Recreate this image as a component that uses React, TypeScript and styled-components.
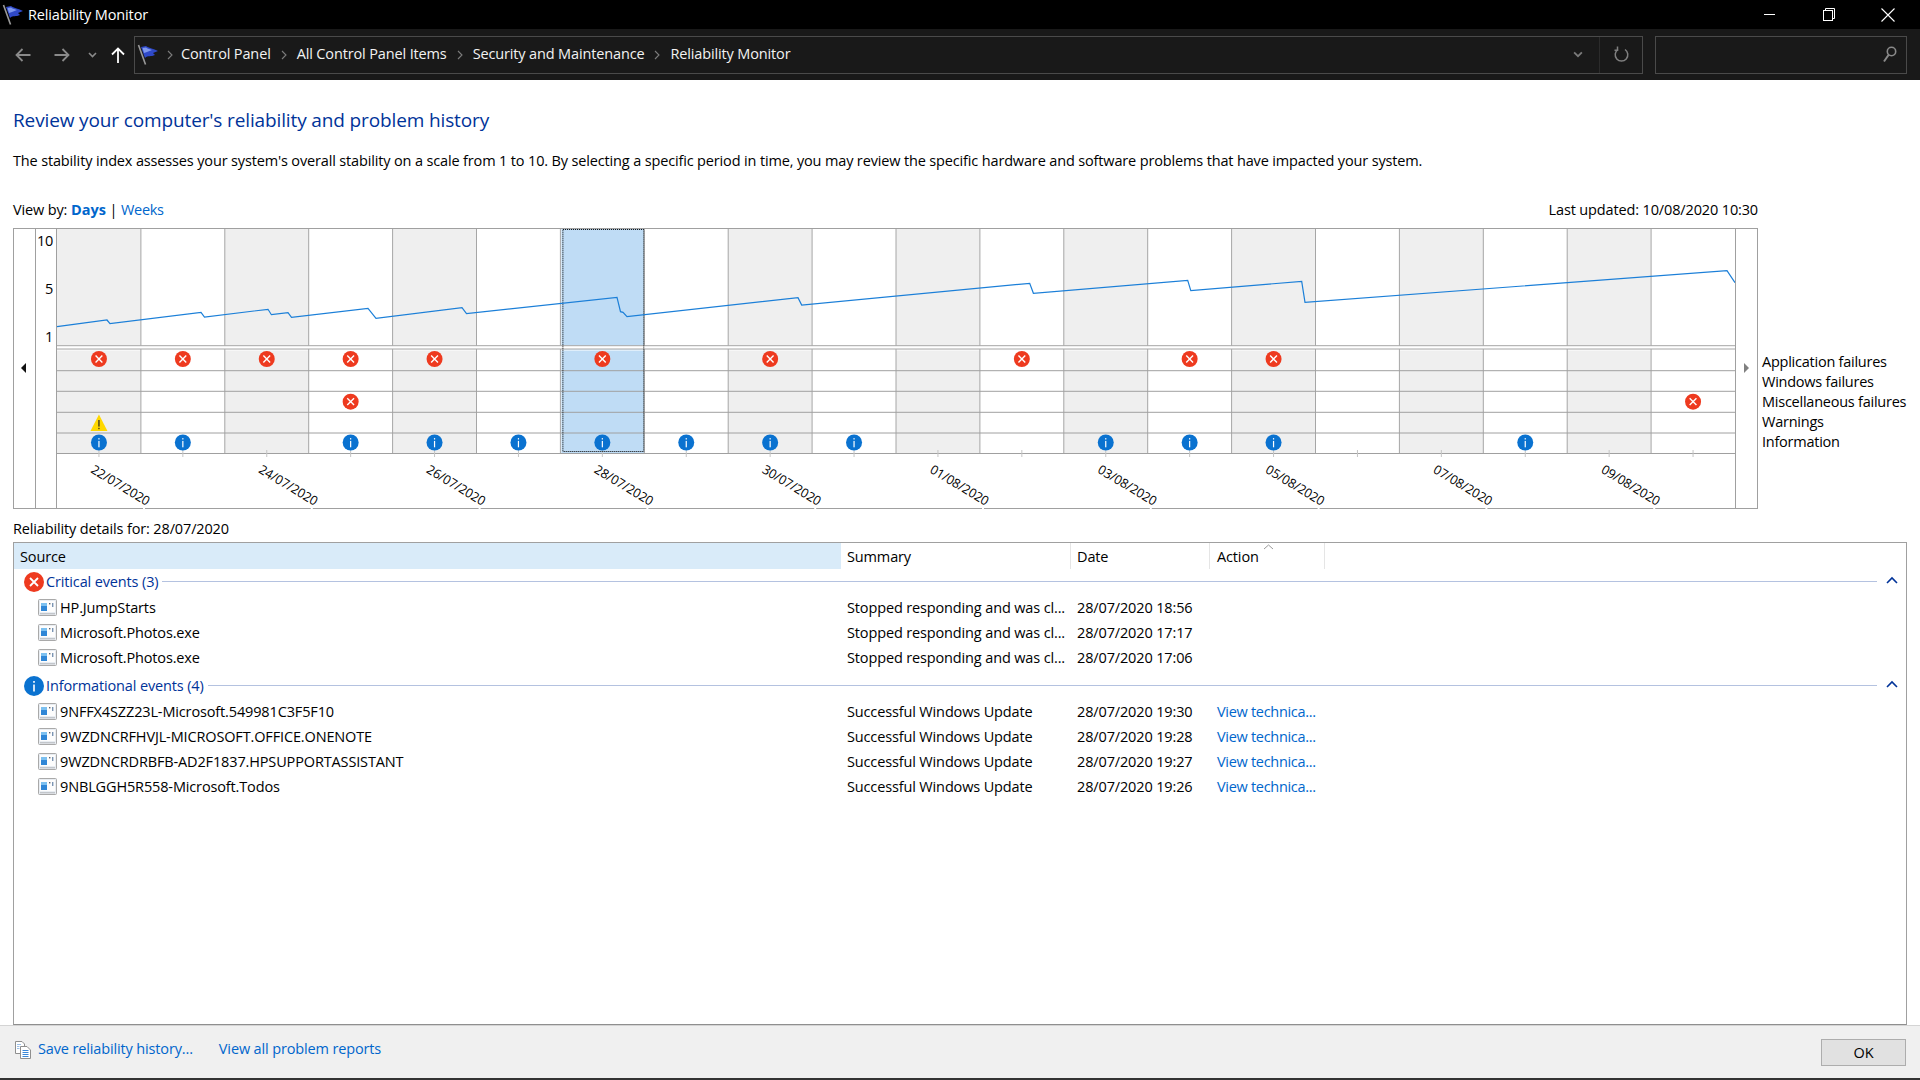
import React from "react";
import styled, { createGlobalStyle } from "styled-components";

const FONT = `"Open Sans", "Noto Sans", sans-serif`;

const GlobalStyle = createGlobalStyle`
  html, body { margin: 0; padding: 0; background: #fff; }
  body { font-family: ${FONT}; font-size: 14.5px; letter-spacing: -0.14px; color: #000; }
`;

const Page = styled.div`
  width: 1920px;
  height: 1080px;
  display: flex;
  flex-direction: column;
  overflow: hidden;
  background: #fff;
`;

const TitleBar = styled.div`
  height: 29px;
  background: #000;
  color: #fff;
  display: flex;
  align-items: center;
  padding-left: 2px;
  flex: none;
`;

const TitleText = styled.span`
  margin-left: 4px;
  line-height: 29px;
`;

const WinButtons = styled.div`
  margin-left: auto;
  display: flex;
  padding-right: 3px;
`;

const WinButton = styled.div`
  width: 59px;
  height: 29px;
  display: flex;
  align-items: center;
  justify-content: center;
`;

const AddressBar = styled.div`
  height: 51px;
  background: #191919;
  display: flex;
  align-items: center;
  flex: none;
`;

const NavButton = styled.div<{ $w: number }>`
  width: ${(p) => p.$w}px;
  display: flex;
  justify-content: center;
  align-items: center;
`;

const AddressBox = styled.div`
  margin-left: 4px;
  width: 1509px;
  height: 38px;
  box-sizing: border-box;
  border: 1px solid #4a4a4a;
  display: flex;
  align-items: center;
  padding-left: 2px;
  color: #f2f2f2;
`;

const CrumbSep = styled.div<{ $w: number }>`
  width: ${(p) => p.$w}px;
  display: flex;
  justify-content: center;
`;

const Crumb = styled.span`
  white-space: nowrap;
  margin-top: -2px;
`;

const AddressTools = styled.div`
  margin-left: auto;
  display: flex;
  align-items: center;
  height: 100%;
`;

const DropCell = styled.div`
  width: 41px;
  display: flex;
  justify-content: center;
  padding-right: 1px;
`;

const RefreshCell = styled.div`
  width: 42px;
  height: 100%;
  border-left: 1px solid #2b2b2b;
  display: flex;
  align-items: center;
  justify-content: center;
`;

const SearchBox = styled.div`
  margin-left: 12px;
  width: 252px;
  height: 38px;
  box-sizing: border-box;
  border: 1px solid #4a4a4a;
  display: flex;
  align-items: center;
  justify-content: flex-end;
  padding-right: 9px;
`;

const Content = styled.div`
  flex: 1;
  min-height: 0;
  display: flex;
  flex-direction: column;
  padding: 27px 13px 0;
`;

const Heading = styled.h1`
  margin: 0;
  font-size: 19px;
  font-weight: 400;
  line-height: 26px;
  color: #003399;
  letter-spacing: -0.13px;
`;

const Description = styled.p`
  margin: 18px 0 0;
  line-height: 20px;
  white-space: nowrap;
  letter-spacing: -0.15px;
`;

const ViewRow = styled.div`
  margin-top: 29px;
  width: 1745px;
  height: 20px;
  line-height: 20px;
  display: flex;
  justify-content: space-between;
`;

const Link = styled.a<{ $bold?: boolean }>`
  color: #0066cc;
  font-weight: ${(p) => (p.$bold ? 700 : 400)};
  letter-spacing: ${(p) => (p.$bold ? "0" : "-0.3px")};
`;

const ChartRow = styled.div`
  margin-top: 8px;
  display: flex;
  gap: 4px;
`;

const ChartBox = styled.div`
  width: 1745px;
  height: 281px;
  box-sizing: border-box;
  border: 1px solid #a0a0a0;
  display: flex;
  flex: none;
`;

const ArrowCol = styled.div<{ $w: number; $side: "left" | "right" }>`
  width: ${(p) => p.$w}px;
  box-sizing: border-box;
  ${(p) => (p.$side === "left" ? "border-right" : "border-left")}: 1px solid #a0a0a0;
  display: flex;
  justify-content: center;
  padding-top: 134px;
  padding-right: ${(p) => (p.$side === "left" ? 2 : 0)}px;
`;

const Triangle = styled.div<{ $side: "left" | "right" }>`
  width: 0;
  height: 0;
  border-top: 5px solid transparent;
  border-bottom: 5px solid transparent;
  ${(p) =>
    p.$side === "left"
      ? "border-right: 5px solid #111;"
      : "border-left: 5px solid #808080;"}
`;

const ScaleCol = styled.div`
  width: 21px;
  box-sizing: border-box;
  border-right: 1px solid #a0a0a0;
  display: flex;
  flex-direction: column;
  align-items: flex-end;
  gap: 30px;
  padding: 3px 3px 0 0;
`;

const ScaleLabel = styled.span`
  line-height: 18px;
  letter-spacing: -0.3px;
`;

const PlotSvg = styled.svg`
  display: block;
  flex: none;
  overflow: visible;
  font-family: ${FONT};
`;

const Legend = styled.div`
  display: flex;
  flex-direction: column;
  padding-top: 124px;
  white-space: nowrap;
  letter-spacing: -0.24px;
`;

const LegendItem = styled.div`
  line-height: 20px;
`;

const DetailsLabel = styled.div`
  margin-top: 10px;
  line-height: 20px;
`;

const ListBox = styled.div`
  margin-top: 3px;
  flex: 1;
  min-height: 0;
  box-sizing: border-box;
  border: 1px solid #a0a0a0;
  border-bottom-color: #8f8f8f;
`;

const HeaderRow = styled.div`
  display: flex;
  height: 26px;
  line-height: 27px;
`;

const HeaderCell = styled.div<{ $w: number; $active?: boolean; $pad?: number }>`
  position: relative;
  width: ${(p) => p.$w}px;
  box-sizing: border-box;
  padding-left: ${(p) => p.$pad ?? 6}px;
  background: ${(p) => (p.$active ? "#d9ebf9" : "transparent")};
  border-right: ${(p) => (p.$active ? "0" : "1px solid #e5e5e5")};
`;

const SortCaret = styled.svg`
  position: absolute;
  left: 53px;
  top: 1px;
`;

const GroupRow = styled.div<{ $first?: boolean }>`
  height: 25px;
  margin-top: ${(p) => (p.$first ? 0 : 3)}px;
  margin-bottom: 1px;
  display: flex;
  align-items: center;
  padding-left: 10px;
  color: #003399;
`;

const GroupTitle = styled.span`
  margin-left: 2px;
  white-space: nowrap;
`;

const GroupLine = styled.div`
  flex: 1;
  height: 1px;
  background: #b4c2e0;
  margin-left: 4px;
`;

const GroupToggle = styled.div`
  width: 29px;
  display: flex;
  justify-content: center;
  margin-bottom: 4px;
`;

const Row = styled.div`
  display: grid;
  grid-template-columns: 827px 230px 140px 115px;
  height: 25px;
  line-height: 25px;
  white-space: nowrap;
`;

const SourceCell = styled.div`
  display: flex;
  align-items: center;
  padding-left: 24px;
  gap: 3px;
`;

const Cell = styled.div`
  padding-left: 6px;
`;

const Footer = styled.div`
  height: 53px;
  box-sizing: border-box;
  flex: none;
  background: #f0f0f0;
  border-top: 1px solid #d4d4d4;
  display: flex;
  align-items: center;
  padding: 0 14px 0 15px;
`;

const FooterIcon = styled.div`
  display: flex;
  margin-bottom: 5px;
`;

const FooterLink = styled.a<{ $gap: number }>`
  margin-left: ${(p) => p.$gap}px;
  margin-bottom: 8px;
  color: #0066cc;
`;

const OkButton = styled.button`
  margin-left: auto;
  width: 85px;
  height: 27px;
  background: #e1e1e1;
  border: 1px solid #adadad;
  font: inherit;
  padding: 0;
  color: #000;
`;

const BottomStrip = styled.div`
  height: 2px;
  flex: none;
  background: #333;
`;

const Flag = ({ size = 22 }: { size?: number }) => (
  <svg width={size} height={size} viewBox="0 0 22 22">
    <path d="M1.5 1 L8.5 20.5" stroke="#9a9a9a" strokeWidth="1.6" />
    <path d="M4 3 L9 2 C12 4 15 4 21 7 L16 9 L18 11 C14 13 11 11 8 14 Z" fill="#2f49c8" />
    <path d="M5.5 4 L9 3.5 C11 5 13 5 15 6 L10 8 L7 9 Z" fill="#7f98ee" />
  </svg>
);

const ArrowLeft = ({ c }: { c: string }) => (
  <svg width="16" height="14" viewBox="0 0 16 14" fill="none" stroke={c} strokeWidth="1.8">
    <path d="M1.5 7 H15.5 M7.5 1 L1.5 7 L7.5 13" />
  </svg>
);

const ArrowRight = ({ c }: { c: string }) => (
  <svg width="16" height="14" viewBox="0 0 16 14" fill="none" stroke={c} strokeWidth="1.8">
    <path d="M0.5 7 H14.5 M8.5 1 L14.5 7 L8.5 13" />
  </svg>
);

const ArrowUp = () => (
  <svg width="14" height="16" viewBox="0 0 14 16" fill="none" stroke="#fff" strokeWidth="1.8">
    <path d="M7 16 V1.5 M1 7.5 L7 1.5 L13 7.5" />
  </svg>
);

const Chevron = ({ c = "#8a8a8a", w = 9, h = 6 }: { c?: string; w?: number; h?: number }) => (
  <svg width={w} height={h} viewBox="0 0 9 6" fill="none" stroke={c} strokeWidth="1.6">
    <path d="M1 1 L4.5 4.5 L8 1" />
  </svg>
);

const CrumbArrow = () => (
  <svg width="6" height="10" viewBox="0 0 6 10" fill="none" stroke="#7c7c7c" strokeWidth="1.1">
    <path d="M1 1 L5 5 L1 9" />
  </svg>
);

const RefreshIcon = () => (
  <svg width="15" height="17" viewBox="0 0 15 17" fill="none" stroke="#808080" strokeWidth="1.5">
    <path d="M4 3.5 A6.3 6.3 0 1 0 11 3.5" />
    <path d="M3.5 0.5 V4.2 H0.5" />
  </svg>
);

const SearchIcon = () => (
  <svg width="15" height="17" viewBox="0 0 15 17" fill="none" stroke="#8a8a8a" strokeWidth="1.6">
    <circle cx="9.5" cy="5.5" r="4.2" />
    <path d="M6.5 9 L2 15.5" strokeWidth="2" />
  </svg>
);

const ErrorGroupIcon = () => (
  <svg width="20" height="20" viewBox="0 0 20 20" style={{ flex: "none" }}>
    <circle cx="10" cy="10" r="10" fill="#ee3a1f" />
    <path d="M6 6 L14 14 M14 6 L6 14" stroke="#fff" strokeWidth="1.8" />
  </svg>
);

const InfoGroupIcon = () => (
  <svg width="20" height="20" viewBox="0 0 20 20" style={{ flex: "none" }}>
    <circle cx="10" cy="10" r="10" fill="#0a72d0" />
    <rect x="9.2" y="8.5" width="1.6" height="7" fill="#fff" />
    <rect x="9.2" y="5" width="1.6" height="1.8" fill="#fff" />
  </svg>
);

const AppIcon = () => (
  <svg width="19" height="18" viewBox="0 0 19 18" style={{ flex: "none" }}>
    <rect x="0.5" y="0.5" width="18" height="16" rx="1" fill="#e9edf2" stroke="#a9a9a9" />
    <rect x="2" y="2" width="15" height="11" fill="#fdfdfd" />
    <rect x="3" y="4" width="6" height="8" fill="#2f86d6" />
    <rect x="3" y="4" width="6" height="3" fill="#7cc0f0" />
    <rect x="11" y="4" width="1.4" height="1.4" fill="#58606a" />
    <rect x="14" y="4" width="1.4" height="4" fill="#7a95b4" />
    <rect x="2" y="14" width="15" height="1.4" fill="#c2c6cb" />
  </svg>
);

const SaveIcon = () => (
  <svg width="16" height="18" viewBox="0 0 16 18" fill="none" style={{ flex: "none" }}>
    <path d="M0.5 0.5 H7 L9.5 3 V12.5 H0.5 Z" fill="#fff" stroke="#8f8f8f" />
    <path d="M5.5 5.5 H12 L15.5 9 V17.5 H5.5 Z" fill="#fff" stroke="#8f8f8f" />
    <path d="M7.5 9.5 H13.5 M7.5 11.5 H13.5 M7.5 13.5 H13.5 M7.5 15.5 H13.5" stroke="#3a87d8" />
    <path d="M2 3.5 H6 M2 5.5 H4.5 M2 7.5 H4.5" stroke="#9cc0e8" />
  </svg>
);

// chart geometry, in page pixels
const PLOT_X = 57;
const PLOT_Y = 229;
const PLOT_W = 1678;
const PLOT_H = 279;
const COL_W = 83.9;
const COLS = Array.from({ length: 20 }, (_, i) => i);
const ROW_LINES = [370.7, 391.3, 412.3, 433, 453.5];
const ROW_Y = { app: 359, misc: 401.7, warn: 423, info: 442.5 };
const SELECTED = 6;

const colCenter = (i: number) => PLOT_X + COL_W * i + COL_W / 2;

const STABILITY = [
  [57, 326.7], [107, 320], [110, 323.7], [201, 312.3], [204.5, 317], [268, 309.3],
  [271.4, 314.7], [288, 312.7], [291.5, 317.3], [368, 308.3], [376, 318.3], [462, 307.7],
  [466.5, 313.7], [617, 297.3], [620.5, 311.7], [623, 312.3], [627, 316.7], [798, 297.7],
  [801.7, 305], [1029.7, 283.3], [1033.4, 293.3], [1187.7, 280.3], [1190.8, 290.7],
  [1301.7, 281.3], [1305, 302.3], [1727, 270.7], [1735, 282.7],
];

const APP_FAILS = [0, 1, 2, 3, 4, 6, 8, 11, 13, 14];
const MISC_FAILS = [3, 19];
const WARNINGS = [0];
const INFOS = [0, 1, 3, 4, 5, 6, 7, 8, 9, 12, 13, 14, 17];
const DATES = [
  "22/07/2020", "24/07/2020", "26/07/2020", "28/07/2020", "30/07/2020",
  "01/08/2020", "03/08/2020", "05/08/2020", "07/08/2020", "09/08/2020",
];

const ErrorMark = ({ x, y }: { x: number; y: number }) => (
  <g transform={`translate(${x} ${y})`}>
    <circle r="8" fill="#ee3a1f" />
    <path d="M-3.4 -3.4 L3.4 3.4 M3.4 -3.4 L-3.4 3.4" stroke="#fff" strokeWidth="1.4" />
  </g>
);

const InfoMark = ({ x, y }: { x: number; y: number }) => (
  <g transform={`translate(${x} ${y})`}>
    <circle r="8" fill="#0a72d0" />
    <rect x="-0.6" y="-1.6" width="1.2" height="6.4" fill="#fff" />
    <rect x="-0.6" y="-4.4" width="1.2" height="1.4" fill="#fff" />
  </g>
);

const WarnMark = ({ x, y }: { x: number; y: number }) => (
  <g transform={`translate(${x} ${y})`}>
    <path d="M0 -8.5 L8.5 8 H-8.5 Z" fill="#ffd800" />
    <rect x="-0.6" y="-3" width="1.2" height="6.6" fill="#222" />
    <rect x="-0.6" y="4.8" width="1.2" height="1.4" fill="#222" />
  </g>
);

const StabilityPlot = () => {
  const selX = PLOT_X + COL_W * SELECTED;
  return (
    <PlotSvg
      width={PLOT_W}
      height={PLOT_H}
      viewBox={`${PLOT_X} ${PLOT_Y} ${PLOT_W} ${PLOT_H}`}
    >
      {COLS.filter((i) => i % 2 === 0 && i !== SELECTED).map((i) => (
        <React.Fragment key={i}>
          <rect x={PLOT_X + COL_W * i} y={PLOT_Y} width={COL_W} height={116.5} fill="#efefef" />
          <rect x={PLOT_X + COL_W * i} y={349} width={COL_W} height={104.5} fill="#efefef" />
        </React.Fragment>
      ))}
      <rect x={selX + 1} y={PLOT_Y} width={COL_W - 1} height={116.5} fill="#bfdcf5" />
      <rect x={selX + 1} y={349} width={COL_W - 1} height={104.5} fill="#bfdcf5" />
      <rect x={PLOT_X} y={349} width={PLOT_W} height={2} fill="#ffffff" opacity={0.5} />
      {COLS.slice(1).map((i) => (
        <React.Fragment key={i}>
          <line x1={PLOT_X + COL_W * i} x2={PLOT_X + COL_W * i} y1={PLOT_Y} y2={345.7} stroke="#a6a6a6" />
          <line x1={PLOT_X + COL_W * i} x2={PLOT_X + COL_W * i} y1={349} y2={453.5} stroke="#a6a6a6" />
        </React.Fragment>
      ))}
      <line x1={PLOT_X} x2={PLOT_X + PLOT_W} y1={345.7} y2={345.7} stroke="#a6a6a6" />
      <line x1={PLOT_X} x2={PLOT_X + PLOT_W} y1={349} y2={349} stroke="#a6a6a6" />
      {ROW_LINES.map((y) => (
        <line key={y} x1={PLOT_X} x2={PLOT_X + PLOT_W} y1={y} y2={y} stroke="#a0a0a0" />
      ))}
      {COLS.map((i) => (
        <line key={i} x1={colCenter(i)} x2={colCenter(i)} y1={450} y2={457} stroke="#c4c4c4" />
      ))}
      <rect
        x={selX + 2.5}
        y={229.5}
        width={COL_W - 3}
        height={222}
        fill="none"
        stroke="#000"
        strokeDasharray="1 1"
      />
      <polyline
        points={STABILITY.map((p) => p.join(",")).join(" ")}
        fill="none"
        stroke="#1b7fd8"
        strokeWidth="1.2"
      />
      {APP_FAILS.map((i) => (
        <ErrorMark key={i} x={colCenter(i)} y={ROW_Y.app} />
      ))}
      {MISC_FAILS.map((i) => (
        <ErrorMark key={i} x={colCenter(i)} y={ROW_Y.misc} />
      ))}
      {WARNINGS.map((i) => (
        <WarnMark key={i} x={colCenter(i)} y={ROW_Y.warn} />
      ))}
      {INFOS.map((i) => (
        <InfoMark key={i} x={colCenter(i)} y={ROW_Y.info} />
      ))}
      {DATES.map((d, n) => {
        const x = colCenter(n * 2) - 9;
        return (
          <React.Fragment key={d}>
            <text x={x} y={472} fontSize="12.7" fill="#000" transform={`rotate(31 ${x} 472)`}>
              {d}
            </text>
            <rect x={143 + 167.8 * n} y={507.5} width={2} height={2} fill="#fff" />
          </React.Fragment>
        );
      })}
    </PlotSvg>
  );
};

const criticalRows = [
  ["HP.JumpStarts", "Stopped responding and was cl...", "28/07/2020 18:56"],
  ["Microsoft.Photos.exe", "Stopped responding and was cl...", "28/07/2020 17:17"],
  ["Microsoft.Photos.exe", "Stopped responding and was cl...", "28/07/2020 17:06"],
];

const infoRows = [
  ["9NFFX4SZZ23L-Microsoft.549981C3F5F10", "Successful Windows Update", "28/07/2020 19:30"],
  ["9WZDNCRFHVJL-MICROSOFT.OFFICE.ONENOTE", "Successful Windows Update", "28/07/2020 19:28"],
  ["9WZDNCRDRBFB-AD2F1837.HPSUPPORTASSISTANT", "Successful Windows Update", "28/07/2020 19:27"],
  ["9NBLGGH5R558-Microsoft.Todos", "Successful Windows Update", "28/07/2020 19:26"],
];

const GroupChevron = () => (
  <svg width="12" height="8" viewBox="0 0 12 8" fill="none" stroke="#003399" strokeWidth="1.6">
    <path d="M1 7 L6 2 L11 7" />
  </svg>
);

const EventRow = ({ cols, action }: { cols: string[]; action?: string }) => (
  <Row>
    <SourceCell>
      <AppIcon />
      <span>{cols[0]}</span>
    </SourceCell>
    <Cell>{cols[1]}</Cell>
    <Cell>{cols[2]}</Cell>
    <Cell>{action && <Link>{action}</Link>}</Cell>
  </Row>
);

const App: React.FC = () => (
  <Page>
    <GlobalStyle />
    <TitleBar>
      <Flag />
      <TitleText>Reliability Monitor</TitleText>
      <WinButtons>
        <WinButton>
          <svg width="11" height="2" viewBox="0 0 11 2">
            <rect width="11" height="1" fill="#fff" />
          </svg>
        </WinButton>
        <WinButton>
          <svg width="12" height="13" viewBox="0 0 12 13" fill="none" stroke="#fff">
            <rect x="0.5" y="2.5" width="9" height="10" />
            <path d="M2.5 2.5 V0.5 H11.5 V10.5 H9.5" />
          </svg>
        </WinButton>
        <WinButton>
          <svg width="14" height="14" viewBox="0 0 14 14" fill="none" stroke="#fff" strokeWidth="1.1">
            <path d="M0.5 0.5 L13.5 13.5 M13.5 0.5 L0.5 13.5" />
          </svg>
        </WinButton>
      </WinButtons>
    </TitleBar>

    <AddressBar>
      <NavButton $w={46}>
        <ArrowLeft c="#8a8a8a" />
      </NavButton>
      <NavButton $w={32}>
        <ArrowRight c="#8a8a8a" />
      </NavButton>
      <NavButton $w={28}>
        <Chevron />
      </NavButton>
      <NavButton $w={24}>
        <ArrowUp />
      </NavButton>
      <AddressBox>
        <Flag />
        <CrumbSep $w={22}>
          <CrumbArrow />
        </CrumbSep>
        <Crumb>Control Panel</Crumb>
        <CrumbSep $w={26}>
          <CrumbArrow />
        </CrumbSep>
        <Crumb>All Control Panel Items</Crumb>
        <CrumbSep $w={26}>
          <CrumbArrow />
        </CrumbSep>
        <Crumb>Security and Maintenance</Crumb>
        <CrumbSep $w={26}>
          <CrumbArrow />
        </CrumbSep>
        <Crumb>Reliability Monitor</Crumb>
        <AddressTools>
          <DropCell>
            <Chevron c="#7a7a7a" w={10} h={7} />
          </DropCell>
          <RefreshCell>
            <RefreshIcon />
          </RefreshCell>
        </AddressTools>
      </AddressBox>
      <SearchBox>
        <SearchIcon />
      </SearchBox>
    </AddressBar>

    <Content>
      <Heading>Review your computer's reliability and problem history</Heading>
      <Description>
        The stability index assesses your system's overall stability on a scale from 1 to 10. By
        selecting a specific period in time, you may review the specific hardware and software
        problems that have impacted your system.
      </Description>
      <ViewRow>
        <span>
          View by: <Link $bold>Days</Link> | <Link>Weeks</Link>
        </span>
        <span>Last updated: 10/08/2020 10:30</span>
      </ViewRow>

      <ChartRow>
        <ChartBox>
          <ArrowCol $w={22} $side="left">
            <Triangle $side="left" />
          </ArrowCol>
          <ScaleCol>
            <ScaleLabel>10</ScaleLabel>
            <ScaleLabel>5</ScaleLabel>
            <ScaleLabel>1</ScaleLabel>
          </ScaleCol>
          <StabilityPlot />
          <ArrowCol $w={22} $side="right">
            <Triangle $side="right" />
          </ArrowCol>
        </ChartBox>
        <Legend>
          <LegendItem>Application failures</LegendItem>
          <LegendItem>Windows failures</LegendItem>
          <LegendItem>Miscellaneous failures</LegendItem>
          <LegendItem>Warnings</LegendItem>
          <LegendItem>Information</LegendItem>
        </Legend>
      </ChartRow>

      <DetailsLabel>Reliability details for: 28/07/2020</DetailsLabel>

      <ListBox>
        <HeaderRow>
          <HeaderCell $w={827} $active>
            Source
          </HeaderCell>
          <HeaderCell $w={230}>Summary</HeaderCell>
          <HeaderCell $w={139}>Date</HeaderCell>
          <HeaderCell $w={115} $pad={7}>
            Action
            <SortCaret width="11" height="6" viewBox="0 0 11 6" fill="none" stroke="#9a9a9a">
              <path d="M1 5 L5.5 1 L10 5" />
            </SortCaret>
          </HeaderCell>
        </HeaderRow>

        <GroupRow $first>
          <ErrorGroupIcon />
          <GroupTitle>Critical events (3)</GroupTitle>
          <GroupLine />
          <GroupToggle>
            <GroupChevron />
          </GroupToggle>
        </GroupRow>
        {criticalRows.map((r, i) => (
          <EventRow key={i} cols={r} />
        ))}

        <GroupRow>
          <InfoGroupIcon />
          <GroupTitle>Informational events (4)</GroupTitle>
          <GroupLine />
          <GroupToggle>
            <GroupChevron />
          </GroupToggle>
        </GroupRow>
        {infoRows.map((r, i) => (
          <EventRow key={i} cols={r} action="View technica..." />
        ))}
      </ListBox>
    </Content>

    <Footer>
      <FooterIcon>
        <SaveIcon />
      </FooterIcon>
      <FooterLink $gap={7}>Save reliability history...</FooterLink>
      <FooterLink $gap={26}>View all problem reports</FooterLink>
      <OkButton>OK</OkButton>
    </Footer>
    <BottomStrip />
  </Page>
);

export default App;
